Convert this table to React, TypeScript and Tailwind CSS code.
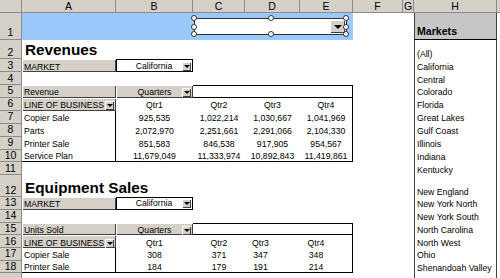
import type { ReactNode } from 'react';

const CELL = 'flex items-end pb-[0.5px] text-[8.7px] leading-[10px] whitespace-nowrap';
const RAISED = 'bg-[#d4d0c8] shadow-[inset_1px_1px_0_#fff,inset_-1px_-1px_0_#404040]';

function Row({ n, h, children }: { n?: number; h: string; children: ReactNode }) {
  return (
    <div className={`grid grid-cols-[22px_94px_77px_52px_55px_53px_50px_11px_83px_3px] ${h}`}>
      <div className="flex items-end justify-center border-r border-b border-[#8c8c8c] bg-[#d4d0c8] pb-[1px] text-[10.5px] leading-none">
        {n}
      </div>
      {children}
    </div>
  );
}

function Drop() {
  return (
    <div className={`flex h-[9px] w-[9px] shrink-0 items-center justify-center ${RAISED}`}>
      <span className="block h-0 w-0 border-x-[3px] border-t-[3px] border-x-transparent border-t-black" />
    </div>
  );
}

// grey pivot field button
function Field({ children, drop, center }: { children: ReactNode; drop?: boolean; center?: boolean }) {
  return (
    <div className={`${CELL} ${RAISED} items-center pr-[2px] pl-[2px]`}>
      <span className={center ? 'flex-1 pl-[9px] text-center' : 'flex-1'}>{children}</span>
      {drop && <Drop />}
    </div>
  );
}

function PageItem({ children }: { children: ReactNode }) {
  return (
    <div className={`${CELL} items-center border border-black bg-white pr-[1px]`}>
      <span className="flex-1 pl-[9px] text-center">{children}</span>
      <Drop />
    </div>
  );
}

function Tail({ market }: { market?: string }) {
  return (
    <>
      <div />
      <div />
      <div className={`${CELL} border-x border-[#404040] pl-[2px]`}>{market}</div>
      <div />
    </>
  );
}

function Handle({ pos }: { pos: string }) {
  return <span className={`absolute size-[6px] rounded-full border border-[#333] bg-white ${pos}`} />;
}

function ComboBox() {
  return (
    <div className="absolute left-[194px] top-[5px] flex h-[17px] w-[153px] items-center justify-end border border-[#333] bg-white pr-[1px]">
      <div className={`flex h-[13px] w-[15px] items-center justify-center ${RAISED}`}>
        <span className="block h-0 w-0 border-x-[4px] border-t-[4px] border-x-transparent border-t-black" />
      </div>
      <Handle pos="-left-[4px] -top-[4px]" />
      <Handle pos="-left-[4px] top-[4.5px]" />
      <Handle pos="-left-[4px] top-[12px]" />
      <Handle pos="left-[72.5px] -top-[4px]" />
      <Handle pos="left-[72.5px] top-[12px]" />
      <Handle pos="left-[148px] -top-[4px]" />
      <Handle pos="left-[148px] top-[4.5px]" />
      <Handle pos="left-[148px] top-[12px]" />
    </div>
  );
}

function QtrRow({ n, h, shift }: { n: number; h: string; shift?: boolean }) {
  return (
    <Row n={n} h={h}>
      <Field drop>LINE OF BUSINESS</Field>
      <div className={`${CELL} justify-center`}>Qtr1</div>
      <div className={`${CELL} justify-center`}>Qtr2</div>
      <div className={`${CELL} justify-center ${shift ? 'pr-[24px]' : ''}`}>Qtr3</div>
      <div className={`${CELL} justify-center border-r border-black ${shift ? 'pr-[20px]' : ''}`}>Qtr4</div>
      <Tail market={MARKETS[n]} />
    </Row>
  );
}

function DataRow({
  n,
  h,
  label,
  values,
  last,
  shift,
}: {
  n: number;
  h: string;
  label: string;
  values: string[];
  last?: boolean;
  shift?: boolean;
}) {
  const b = last ? 'border-b border-black' : '';
  return (
    <Row n={n} h={h}>
      <div className={`${CELL} border-r border-black pl-[2px] ${b}`}>{label}</div>
      <div className={`${CELL} justify-center ${b}`}>{values[0]}</div>
      <div className={`${CELL} justify-center ${b}`}>{values[1]}</div>
      <div className={`${CELL} justify-center ${b} ${shift ? 'pr-[24px]' : ''}`}>{values[2]}</div>
      <div className={`${CELL} justify-center border-r border-black ${b} ${shift ? 'pr-[20px]' : ''}`}>{values[3]}</div>
      <Tail market={MARKETS[n]} />
    </Row>
  );
}

const MARKETS: Record<number, string> = {
  2: '(All)',
  3: 'California',
  4: 'Central',
  5: 'Colorado',
  6: 'Florida',
  7: 'Great Lakes',
  8: 'Gulf Coast',
  9: 'Illinois',
  10: 'Indiana',
  11: 'Kentucky',
  12: 'New England',
  13: 'New York North',
  14: 'New York South',
  15: 'North Carolina',
  16: 'North West',
  17: 'Ohio',
  18: 'Shenandoah Valley',
};

const REVENUE = [
  { label: 'Copier Sale', values: ['925,535', '1,022,214', '1,030,667', '1,041,969'] },
  { label: 'Parts', values: ['2,072,970', '2,251,661', '2,291,066', '2,104,330'] },
  { label: 'Printer Sale', values: ['851,583', '846,538', '917,905', '954,567'] },
  { label: 'Service Plan', values: ['11,679,049', '11,333,974', '10,892,843', '11,419,861'] },
];

const UNITS = [
  { label: 'Copier Sale', values: ['308', '371', '347', '348'] },
  { label: 'Printer Sale', values: ['184', '179', '191', '214'] },
];

export default function App() {
  return (
    <div className="h-[278px] w-[500px] overflow-hidden bg-white font-['Liberation_Sans',Arial,sans-serif] text-black">
      {/* column headers */}
      <div className="grid h-[13.3px] grid-cols-[22px_94px_77px_52px_55px_53px_50px_11px_83px_3px] bg-[#d4d0c8] text-[10.5px] leading-none">
        <div className="border-r border-b border-[#8c8c8c]" />
        {['A', 'B', 'C', 'D', 'E', 'F', 'G', 'H'].map((l) => (
          <div key={l} className="flex items-center justify-center border-r border-b border-[#8c8c8c]">
            {l}
          </div>
        ))}
        <div className="border-b border-[#8c8c8c]" />
      </div>

      <Row n={1} h="h-[26.3px] relative">
        <div className="col-span-5 bg-[#99c9fb]" />
        <div />
        <div />
        <div className="flex items-end border-x border-b border-[#404040] border-b-black bg-[#c6c6c6] pb-[2px] pl-[2px] text-[10.6px] font-bold leading-none">
          Markets
        </div>
        <div />
        <ComboBox />
      </Row>

      <Row n={2} h="h-[19.7px]">
        <div className="col-span-5 flex items-end pb-[2px] pl-[3px] text-[15.3px] font-bold leading-none">Revenues</div>
        <Tail market={MARKETS[2]} />
      </Row>

      <Row n={3} h="h-[12.9px]">
        <Field>MARKET</Field>
        <PageItem>California</PageItem>
        <div className="col-span-3" />
        <Tail market={MARKETS[3]} />
      </Row>

      <Row n={4} h="h-[12.9px]">
        <div className="col-span-5" />
        <Tail market={MARKETS[4]} />
      </Row>

      <Row n={5} h="h-[12.9px]">
        <Field>Revenue</Field>
        <Field drop center>
          Quarters
        </Field>
        <div className="col-span-3 border-y border-r border-black" />
        <Tail market={MARKETS[5]} />
      </Row>

      <QtrRow n={6} h="h-[12.9px]" />
      {REVENUE.map((r, i) => (
        <DataRow key={r.label} n={7 + i} h="h-[12.9px]" label={r.label} values={r.values} last={i === 3} />
      ))}

      <Row n={11} h="h-[12.9px]">
        <div className="col-span-5" />
        <Tail market={MARKETS[11]} />
      </Row>

      <Row n={12} h="h-[22px]">
        <div className="col-span-5 flex items-end whitespace-nowrap pb-[2px] pl-[3px] text-[15.3px] font-bold leading-none">
          Equipment Sales
        </div>
        <Tail market={MARKETS[12]} />
      </Row>

      <Row n={13} h="h-[12.7px]">
        <Field>MARKET</Field>
        <PageItem>California</PageItem>
        <div className="col-span-3" />
        <Tail market={MARKETS[13]} />
      </Row>

      <Row n={14} h="h-[12.7px]">
        <div className="col-span-5" />
        <Tail market={MARKETS[14]} />
      </Row>

      <Row n={15} h="h-[12.7px]">
        <Field>Units Sold</Field>
        <Field drop center>
          Quarters
        </Field>
        <div className="col-span-3 border-y border-r border-black" />
        <Tail market={MARKETS[15]} />
      </Row>

      <QtrRow n={16} h="h-[12.7px]" shift />
      {UNITS.map((r, i) => (
        <DataRow key={r.label} n={17 + i} h="h-[12.7px]" label={r.label} values={r.values} last={i === 1} shift />
      ))}

      {/* row 19 only peeks in at the bottom edge */}
      <Row h="h-[12.7px]">
        <div className="col-span-5" />
        <Tail />
      </Row>
    </div>
  );
}
